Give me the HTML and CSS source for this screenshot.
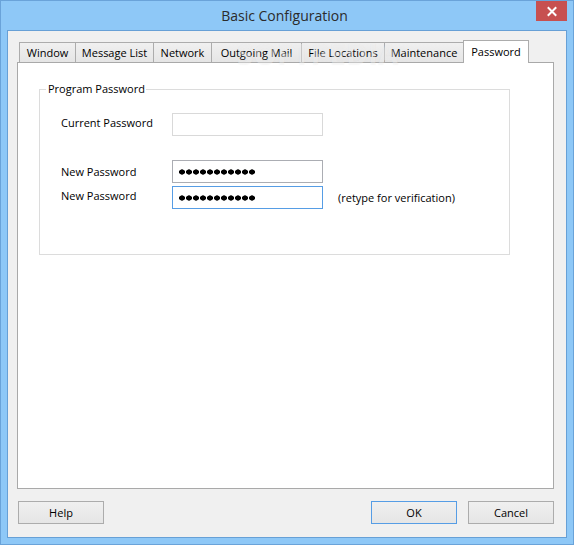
FILE: index.html
```html
<!DOCTYPE html>
<html>
<head>
<meta charset="utf-8">
<title>Basic Configuration</title>
<link rel="stylesheet" href="styles.css">
</head>
<body>
<div class="window">
  <div class="titlebar">
    <span class="title">Basic Configuration</span>
    <div class="close">
      <svg width="31" height="20" viewBox="0 0 31 20"><path d="M12.5 7 L19.5 14 M19.5 7 L12.5 14" stroke="#fff" stroke-width="2" stroke-linecap="square"/></svg>
    </div>
  </div>
  <div class="client">
    <div class="tabs">
      <div class="tab t-window">Window</div>
      <div class="tab t-msg">Message List</div>
      <div class="tab t-net">Network</div>
      <div class="tab t-out">Outgoing Mail</div>
      <div class="tab t-file">File Locations</div>
      <div class="tab t-maint">Maintenance</div>
      <div class="tab t-pass selected">Password</div>
    </div>
    <div class="panel">
      <fieldset class="group">
        <legend>Program Password</legend>
        <div class="rows">
          <div class="row r-current">
            <span class="label">Current Password</span>
            <div class="field disabled"></div>
          </div>
          <div class="row r-new1">
            <span class="label">New Password</span>
            <div class="field"><span class="dots"></span></div>
          </div>
          <div class="row r-new2">
            <span class="label">New Password</span>
            <div class="field focused"><span class="dots"></span></div>
            <span class="hint">(retype for verification)</span>
          </div>
        </div>
      </fieldset>
    </div>
    <div class="buttons">
      <div class="btn">Help</div>
      <div class="spacer"></div>
      <div class="btn default">OK</div>
      <div class="btn">Cancel</div>
    </div>
  </div>
  <div class="watermark">SOFTPEDIA<sup>®</sup></div>
</div>
</body>
</html>
```
FILE: styles.css
```css
html, body {
  margin: 0;
  padding: 0;
}
body {
  font-family: "Open Sans", "Noto Sans", sans-serif;
  font-size: 11px;
  color: #000;
  background: #8ec8f7;
}
.window {
  position: relative;
  width: 574px;
  height: 545px;
  box-sizing: border-box;
  border: 1px solid #6aa3d9;
  background: #8ec8f7;
  overflow: hidden;
}
.titlebar {
  position: relative;
  height: 29px;
  box-sizing: border-box;
  padding: 5px 5px 0 0;
  line-height: 19px;
  text-align: center;
}
.title {
  font-size: 14px;
  color: #2b2b2b;
}
.close {
  position: absolute;
  top: 0;
  right: 6px;
  width: 31px;
  height: 20px;
  background: #c75050;
}
.close svg {
  display: block;
}
.client {
  margin: 0 6px;
  width: 560px;
  height: 508px;
  box-sizing: border-box;
  border: 1px solid #67a0d6;
  background: #f0f0f0;
  padding: 9px 0 0 9px;
}
.tabs {
  display: flex;
  align-items: flex-end;
  height: 22px;
  padding-left: 2px;
}
.tab {
  box-sizing: border-box;
  height: 20px;
  border: 1px solid #acacac;
  border-bottom: none;
  background: linear-gradient(#f0f0f0, #e5e5e5);
  text-align: center;
  line-height: 15px;
  padding-top: 2px;
  margin-left: -1px;
  white-space: nowrap;
}
.tab.t-window { margin-left: 0; width: 57px; }
.t-msg { width: 79px; }
.t-net { width: 59px; }
.t-out { width: 91px; }
.t-file { width: 84px; }
.t-maint { width: 80px; }
.t-pass { width: 66px; }
.tab.selected {
  position: relative;
  z-index: 1;
  height: 23px;
  margin-bottom: -1px;
  background: #fff;
  padding-top: 3px;
}
.panel {
  width: 537px;
  height: 427px;
  box-sizing: border-box;
  border: 1px solid #a9a9a9;
  background: #fff;
  padding: 18px 0 0 21px;
}
.group {
  margin: 0;
  padding: 0;
  width: 471px;
  box-sizing: border-box;
  border: 1px solid #dcdcdc;
}
.group legend {
  margin-left: 6px;
  padding: 0 1px 0 2px;
  line-height: 16px;
}
.rows {
  padding: 16px 0 45px 21px;
}
.row {
  display: flex;
  height: 23px;
}
.r-new1 { margin-top: 24px; }
.r-new2 { margin-top: 3px; }
.label {
  width: 111px;
  line-height: 20px;
}
.r-new1 .label { line-height: 23px; }
.field {
  width: 151px;
  height: 23px;
  box-sizing: border-box;
  border: 1px solid #abadb3;
  background: #fff;
  display: flex;
  align-items: center;
  padding-left: 6px;
}
.field.disabled { border-color: #d9d9d9; }
.field.focused { border-color: #569de5; }
.dots {
  display: block;
  width: 76px;
  height: 6px;
  background: radial-gradient(ellipse 3.3px 2.9px at 3px 3px, #000 80%, transparent 100%) 0 0 / 7px 6px repeat-x;
}
.hint {
  margin-left: 15px;
  line-height: 23px;
}
.buttons {
  display: flex;
  margin-top: 12px;
  padding: 0 12px 0 1px;
  gap: 11px;
}
.spacer { flex: 1; }
.btn {
  width: 86px;
  height: 23px;
  box-sizing: border-box;
  border: 1px solid #acacac;
  background: linear-gradient(#f0f0f0, #e5e5e5);
  text-align: center;
  line-height: 21px;
}
.btn.default { border-color: #569de5; }
.watermark {
  position: absolute;
  left: 236px;
  top: 33px;
  font-family: "Open Sans", sans-serif;
  font-weight: 700;
  font-size: 29px;
  letter-spacing: 0.5px;
  color: rgba(255, 255, 255, 0.35);
  text-shadow: 0 0 1px rgba(150, 150, 150, 0.1);
  pointer-events: none;
}
.watermark sup {
  font-size: 9px;
  font-weight: 400;
}
```
